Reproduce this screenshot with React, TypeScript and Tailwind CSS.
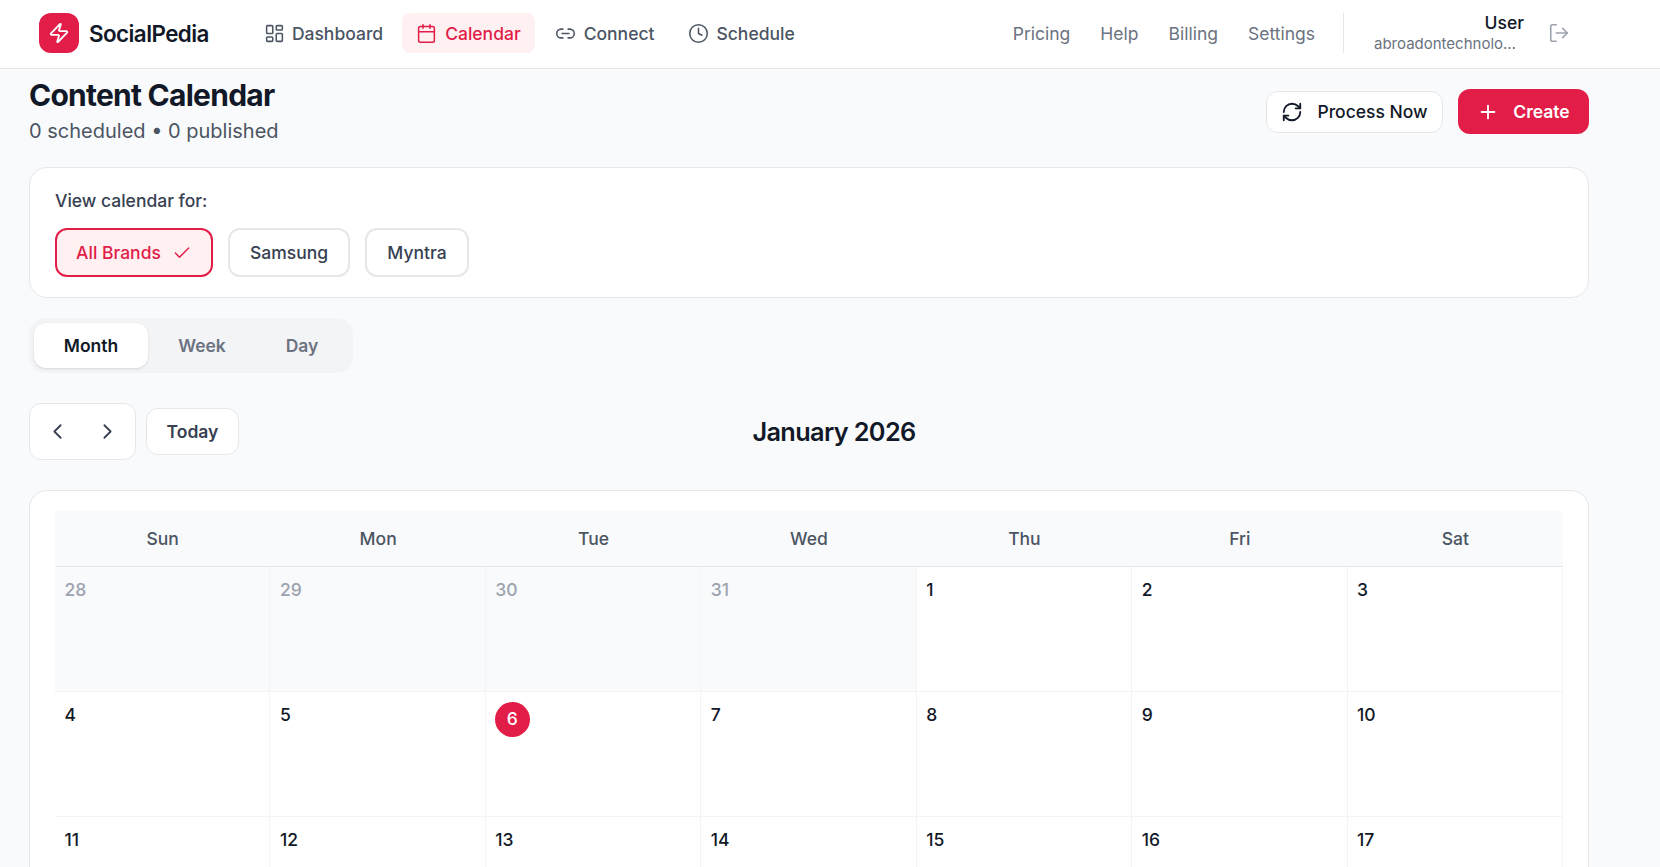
import React from "react";
import {
  Calendar,
  Check,
  ChevronLeft,
  ChevronRight,
  Clock,
  LayoutDashboard,
  Link2,
  LogOut,
  Plus,
  RefreshCw,
  Zap,
} from "lucide-react";

const weekDays = ["Sun", "Mon", "Tue", "Wed", "Thu", "Fri", "Sat"];

const weeks = [
  [28, 29, 30, 31, 1, 2, 3],
  [4, 5, 6, 7, 8, 9, 10],
  [11, 12, 13, 14, 15, 16, 17],
  [18, 19, 20, 21, 22, 23, 24],
  [25, 26, 27, 28, 29, 30, 31],
];

export default function App() {
  return (
    <div className="h-screen overflow-hidden bg-[#f9fafb] font-['Inter',sans-serif] text-[#111827]">
      {/* Top bar */}
      <header className="flex h-[69px] items-center border-b border-[#e5e7eb] bg-white pb-[2px] pl-[39px] pr-[90px]">
        <div className="flex items-center gap-[10px]">
          <div className="flex h-10 w-10 items-center justify-center rounded-xl bg-[#e11d48]">
            <Zap className="h-[22px] w-[22px] text-white" strokeWidth={2} />
          </div>
          <span className="pt-[2px] text-[22.4px] font-semibold tracking-tight text-[#111827]">SocialPedia</span>
        </div>

        <nav className="ml-[41px] flex items-center gap-[5px] text-[17.5px] font-medium text-[#4b5563]">
          <a className="flex h-10 items-center gap-[7px] rounded-lg px-[14px]">
            <LayoutDashboard className="h-[21px] w-[21px]" strokeWidth={1.75} />
            <span className="pt-[2px]">Dashboard</span>
          </a>
          <a className="flex h-10 items-center gap-2 rounded-lg bg-[#fff1f2] px-[14px] text-[#e11d48]">
            <Calendar className="h-[21px] w-[21px]" strokeWidth={1.75} />
            <span className="pt-[2px]">Calendar</span>
          </a>
          <a className="flex h-10 items-center gap-2 rounded-lg pl-[15px] pr-[14px]">
            <Link2 className="h-[21px] w-[21px]" strokeWidth={1.75} />
            <span className="pt-[2px]">Connect</span>
          </a>
          <a className="flex h-10 items-center gap-[7px] rounded-lg pl-[15px] pr-[14px]">
            <Clock className="h-[21px] w-[21px]" strokeWidth={1.75} />
            <span className="pt-[2px]">Schedule</span>
          </a>
        </nav>

        <div className="ml-auto flex items-center gap-[30px] pt-[2px] text-[17.5px] text-[#6b7280]">
          <a>Pricing</a>
          <a>Help</a>
          <a>Billing</a>
          <a>Settings</a>
        </div>

        <div className="ml-[28px] h-10 w-px bg-[#e5e7eb]" />

        <div className="ml-[30px] mb-[2px] flex w-[150px] flex-col items-end">
          <span className="text-[17.5px] leading-[23px] font-medium text-[#111827]">User</span>
          <span className="w-full truncate text-[15px] leading-[20px] text-[#6b7280]">abroadontechnology@gmail.com</span>
        </div>

        <LogOut className="ml-[24px] h-[22px] w-[22px] text-[#9ca3af]" strokeWidth={1.75} />
      </header>

      <main className="pl-[29px] pr-[71px]">
        {/* Page heading */}
        <div className="flex items-start justify-between">
          <div>
            <h1 className="mt-[8px] text-[30px] leading-[36px] font-bold tracking-tight text-[#111827]">Content Calendar</h1>
            <p className="mt-[4px] text-[20px] leading-[28px] text-[#4b5563]">0 scheduled • 0 published</p>
          </div>
          <div className="mt-5 flex items-center gap-[15px]">
            <button className="flex h-[42px] w-[177px] items-center justify-center gap-[14px] rounded-xl border border-[#e5e7eb] bg-white pt-px text-[17.5px] font-medium text-[#111827]">
              <RefreshCw className="h-[22px] w-[22px]" strokeWidth={2} />
              Process Now
            </button>
            <button className="flex h-[45px] w-[131px] items-center justify-center gap-[14px] rounded-xl bg-[#e11d48] pt-px text-[17.5px] font-semibold text-white">
              <Plus className="h-[22px] w-[22px]" strokeWidth={2} />
              Create
            </button>
          </div>
        </div>

        {/* Brand filter */}
        <section className="mt-[22px] h-[131px] rounded-[18px] border border-[#e5e7eb] bg-white px-[25px] pt-[21px]">
          <p className="text-[17.5px] leading-[24px] font-medium text-[#374151]">View calendar for:</p>
          <div className="mt-[15px] flex gap-[15px]">
            <button className="flex h-[49px] w-[158px] items-center justify-center gap-[11px] rounded-xl border-2 border-[#e11d48] bg-[#fff1f2] pt-px text-[17.5px] font-medium text-[#e11d48]">
              All Brands
              <Check className="h-[20px] w-[20px]" strokeWidth={1.75} />
            </button>
            <button className="h-[49px] w-[122px] rounded-xl border-2 border-[#e5e7eb] bg-white pt-px text-[17.5px] font-medium text-[#374151]">
              Samsung
            </button>
            <button className="h-[49px] w-[104px] rounded-xl border-2 border-[#e5e7eb] bg-white pt-px text-[17.5px] font-medium text-[#374151]">
              Myntra
            </button>
          </div>
        </section>

        {/* View switch */}
        <div className="mt-[20px] flex h-[55px] w-[324px] items-center rounded-2xl bg-[#f3f4f6] px-[5px] text-[17.5px] font-semibold text-[#6b7280]">
          <button className="h-[45px] w-[114px] rounded-xl bg-white pt-px text-[#111827] shadow-sm">Month</button>
          <button className="h-[45px] w-[108px] pt-px">Week</button>
          <button className="h-[45px] w-[92px] pt-px">Day</button>
        </div>

        {/* Month navigation */}
        <div className="mt-[30px] flex h-[56px] items-center gap-[10px]">
          <div className="flex h-[57px] w-[107px] items-center justify-center gap-[25px] rounded-xl border border-[#e5e7eb] bg-white text-[#374151]">
            <ChevronLeft className="h-[25px] w-[25px]" strokeWidth={1.75} />
            <ChevronRight className="h-[25px] w-[25px]" strokeWidth={1.75} />
          </div>
          <button className="h-[47px] w-[93px] rounded-xl border border-[#e5e7eb] bg-white pt-[3px] text-[17.5px] font-semibold text-[#374151]">
            Today
          </button>
          <h2 className="flex-1 pr-[170px] pt-[2px] text-center text-[25.3px] font-semibold tracking-tight text-[#111827]">January 2026</h2>
        </div>

        {/* Month grid */}
        <section className="mt-[31px] rounded-[18px] border border-[#e5e7eb] bg-white px-[25px] pt-[20px]">
          <div className="grid h-[56px] grid-cols-7 border-b border-[#e5e7eb] bg-[#f9fafb]">
            {weekDays.map((day) => (
              <div key={day} className="flex items-center justify-center pt-[2px] text-[17.5px] font-medium text-[#4b5563]">
                {day}
              </div>
            ))}
          </div>
          {weeks.map((week, w) => (
            <div key={w} className="grid h-[125px] grid-cols-7">
              {week.map((date, d) => {
                const outside = w === 0 && date > 7;
                const today = w === 1 && date === 6;
                return (
                  <div
                    key={d}
                    className={`border-r border-b border-[#f3f4f6] pl-[9.5px] pt-[10px] ${outside ? "bg-[#f9fafb]" : "bg-white"}`}
                  >
                    {today ? (
                      <span className="-ml-[0.5px] flex h-[35px] w-[35px] items-center justify-center rounded-full bg-[#e11d48] text-[17.5px] font-medium text-white">
                        {date}
                      </span>
                    ) : (
                      <span className={`text-[17.5px] leading-[26px] font-medium ${outside ? "text-[#9ca3af]" : "text-[#111827]"}`}>
                        {date}
                      </span>
                    )}
                  </div>
                );
              })}
            </div>
          ))}
        </section>
      </main>
    </div>
  );
}
